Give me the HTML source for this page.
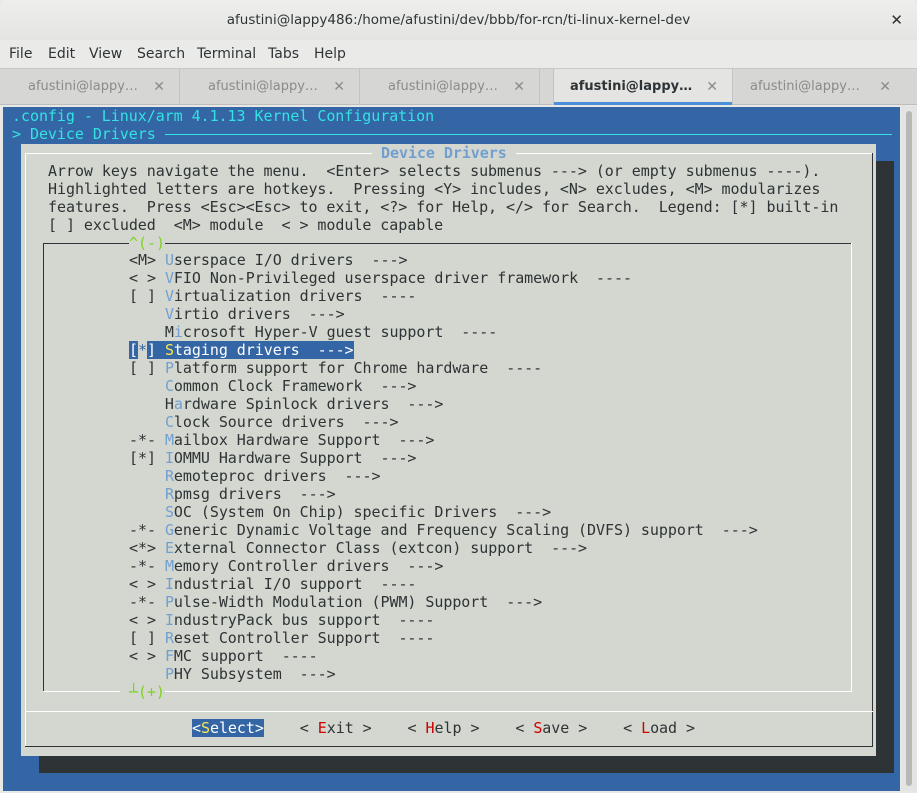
<!DOCTYPE html>
<html><head><meta charset="utf-8"><style>
*{margin:0;padding:0;box-sizing:border-box}
body{width:917px;height:793px;overflow:hidden;background:#e8e8e7;font-family:"DejaVu Sans","Liberation Sans",sans-serif;position:relative}
#title{position:absolute;left:0;top:0;width:917px;height:40px;background:linear-gradient(#eeeeec,#e4e4e2);font-size:13.5px;color:#2e3436;text-align:center;line-height:40px;border-radius:5px 5px 0 0}
#title .x{position:absolute;right:14px;top:0;font-weight:normal;font-size:15px}
#menu{position:absolute;left:0;top:40px;width:917px;height:28px;background:#eaeae8;font-size:14px;color:#2e3436;line-height:28px}
#menu span{position:absolute}
#tabs{position:absolute;left:0;top:68px;width:917px;height:37px;background:#d6d6d4;border-top:1px solid #c8c8c6;border-bottom:1px solid #bdbdbb}
.tab{position:absolute;top:0;height:36px;width:180px;font-size:13px;color:#8a8c8a;line-height:36px;border-right:1px solid #c4c4c2}
.tab b{font-weight:normal;position:absolute;left:28px}
.tab i{font-style:normal;position:absolute;right:14px;font-size:14px}
.tab.act{background:#e4e4e2;color:#2e3436;border-left:1px solid #c4c4c2}
.tab.act:after{content:"";position:absolute;left:0;right:0;bottom:0;height:3px;background:#4a90d9}
#term{position:absolute;left:3px;top:107px;width:897px;height:684px;background:#3465a4;overflow:hidden}
#sb{position:absolute;left:901px;top:106px;width:16px;height:685px;background:#e4e4e2}
#sb div{position:absolute;left:5px;top:5px;width:6px;height:675px;background:#b8b8b6;border-radius:3px}
.r{position:absolute;left:0;height:18px;line-height:18px;font-family:"DejaVu Sans Mono","Liberation Mono",monospace;font-size:15px;letter-spacing:-0.05px;white-space:pre;color:#2e3436}
.c{color:#34e2e2}
.h{color:#729fcf}
.g{color:#8ae234}
.rd{color:#cc0000}
.sel{background:#3465a4;color:#fff}
.y{color:#fce94f}
</style></head><body>
<div id="title">afustini@lappy486:/home/afustini/dev/bbb/for-rcn/ti-linux-kernel-dev<span class="x">✕</span></div>
<div id="menu"><span style="left:9px">File</span><span style="left:48px">Edit</span><span style="left:89px">View</span><span style="left:137px">Search</span><span style="left:197px">Terminal</span><span style="left:268px">Tabs</span><span style="left:314px">Help</span></div>
<div id="tabs">
<div class="tab" style="left:0"><b>afustini@lappy…</b><i>✕</i></div>
<div class="tab" style="left:180px"><b>afustini@lappy…</b><i>✕</i></div>
<div class="tab" style="left:360px"><b>afustini@lappy…</b><i>✕</i></div>
<div class="tab act" style="left:553px"><b style="font-weight:bold;left:16px">afustini@lappy…</b><i style="color:#8a8c8a">✕</i></div>
<div class="tab" style="left:733px;width:184px;border-right:none"><b style="left:17px">afustini@lappy…</b><i style="right:26px">✕</i></div>
</div>
<div id="term">
<div class="r c" style="top:0;left:9px">.config - Linux/arm 4.1.13 Kernel Configuration</div>
<div class="r c" style="top:18px;left:9px">&gt; Device Drivers</div>
<div style="position:absolute;left:162px;top:27px;width:727px;height:1px;background:#34e2e2"></div>
<div style="position:absolute;left:36px;top:54px;width:855px;height:612px;background:#2e3436"></div>
<div style="position:absolute;left:18px;top:37px;width:855px;height:612px;background:#d3d7cf"></div>
<div style="position:absolute;left:22px;top:46px;width:848px;height:1px;background:#fff"></div>
<div style="position:absolute;left:22px;top:46px;width:1px;height:594px;background:#fff"></div>
<div style="position:absolute;left:869px;top:46px;width:1px;height:594px;background:#2e3436"></div>
<div style="position:absolute;left:22px;top:639px;width:848px;height:1px;background:#2e3436"></div>
<div style="position:absolute;left:22px;top:604px;width:848px;height:1px;background:#fff"></div>
<div class="r h" style="top:37px;left:369px;background:#d3d7cf;padding:0 9px;font-weight:bold;color:#729fcf">Device Drivers</div>
<div class="r" style="top:55px;left:45px">Arrow keys navigate the menu.  &lt;Enter&gt; selects submenus ---&gt; (or empty submenus ----).</div>
<div class="r" style="top:73px;left:45px">Highlighted letters are hotkeys.  Pressing &lt;Y&gt; includes, &lt;N&gt; excludes, &lt;M&gt; modularizes</div>
<div class="r" style="top:91px;left:45px">features.  Press &lt;Esc&gt;&lt;Esc&gt; to exit, &lt;?&gt; for Help, &lt;/&gt; for Search.  Legend: [*] built-in</div>
<div class="r" style="top:109px;left:45px">[ ] excluded  &lt;M&gt; module  &lt; &gt; module capable</div>
<div style="position:absolute;left:40px;top:136px;width:809px;height:1px;background:#2e3436"></div>
<div style="position:absolute;left:40px;top:136px;width:1px;height:449px;background:#2e3436"></div>
<div style="position:absolute;left:848px;top:136px;width:1px;height:449px;background:#fff"></div>
<div style="position:absolute;left:40px;top:584px;width:809px;height:1px;background:#fff"></div>
<div class="r g" style="top:127px;left:126px;background:#d3d7cf;color:#7ed321">^(-)</div>
<div class="r" style="top:144px;left:126px">&lt;M&gt; <span class="h">U</span>serspace I/O drivers  ---&gt;</div>
<div class="r" style="top:162px;left:126px">&lt; &gt; <span class="h">V</span>FIO Non-Privileged userspace driver framework  ----</div>
<div class="r" style="top:180px;left:126px">[ ] <span class="h">V</span>irtualization drivers  ----</div>
<div class="r" style="top:198px;left:126px">    <span class="h">V</span>irtio drivers  ---&gt;</div>
<div class="r" style="top:216px;left:126px">    M<span class="h">i</span>crosoft Hyper-V guest support  ----</div>
<div class="r sel" style="top:234px;left:126px">[<span style="background:#d3d7cf;color:#3465a4">*</span>] <span class="y">S</span>taging drivers  ---&gt;</div>
<div class="r" style="top:252px;left:126px">[ ] <span class="h">P</span>latform support for Chrome hardware  ----</div>
<div class="r" style="top:270px;left:126px">    <span class="h">C</span>ommon Clock Framework  ---&gt;</div>
<div class="r" style="top:288px;left:126px">    H<span class="h">a</span>rdware Spinlock drivers  ---&gt;</div>
<div class="r" style="top:306px;left:126px">    <span class="h">C</span>lock Source drivers  ---&gt;</div>
<div class="r" style="top:324px;left:126px">-*- <span class="h">M</span>ailbox Hardware Support  ---&gt;</div>
<div class="r" style="top:342px;left:126px">[*] <span class="h">I</span>OMMU Hardware Support  ---&gt;</div>
<div class="r" style="top:360px;left:126px">    <span class="h">R</span>emoteproc drivers  ---&gt;</div>
<div class="r" style="top:378px;left:126px">    <span class="h">R</span>pmsg drivers  ---&gt;</div>
<div class="r" style="top:396px;left:126px">    <span class="h">S</span>OC (System On Chip) specific Drivers  ---&gt;</div>
<div class="r" style="top:414px;left:126px">-*- <span class="h">G</span>eneric Dynamic Voltage and Frequency Scaling (DVFS) support  ---&gt;</div>
<div class="r" style="top:432px;left:126px">&lt;*&gt; <span class="h">E</span>xternal Connector Class (extcon) support  ---&gt;</div>
<div class="r" style="top:450px;left:126px">-*- <span class="h">M</span>emory Controller drivers  ---&gt;</div>
<div class="r" style="top:468px;left:126px">&lt; &gt; <span class="h">I</span>ndustrial I/O support  ----</div>
<div class="r" style="top:486px;left:126px">-*- <span class="h">P</span>ulse-Width Modulation (PWM) Support  ---&gt;</div>
<div class="r" style="top:504px;left:126px">&lt; &gt; <span class="h">I</span>ndustryPack bus support  ----</div>
<div class="r" style="top:522px;left:126px">[ ] <span class="h">R</span>eset Controller Support  ----</div>
<div class="r" style="top:540px;left:126px">&lt; &gt; <span class="h">F</span>MC support  ----</div>
<div class="r" style="top:558px;left:126px">    <span class="h">P</span>HY Subsystem  ---&gt;</div>
<div class="r g" style="top:576px;left:117px;background:#d3d7cf;color:#7ed321"> ┴(+)</div>
<div class="r" style="top:612px;left:189px"><span class="sel">&lt;<span class="y">S</span>elect&gt;</span>    &lt; <span class="rd">E</span>xit &gt;    &lt; <span class="rd">H</span>elp &gt;    &lt; <span class="rd">S</span>ave &gt;    &lt; <span class="rd">L</span>oad &gt;</div>
</div>
<div id="sb"><div></div></div>
</body></html>
